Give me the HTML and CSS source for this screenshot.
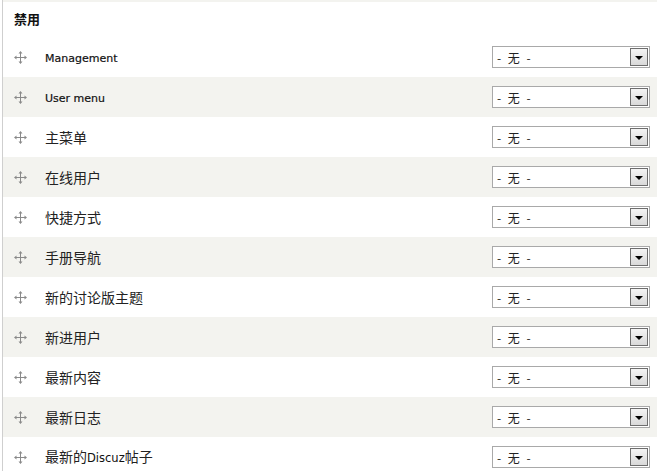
FILE: index.html
```html
<!DOCTYPE html>
<html>
<head>
<meta charset="utf-8">
<link rel="stylesheet" href="styles.css">
</head>
<body>
<div class="page">
  <div class="topstrip"></div>
  <div class="region-title">禁用</div>
  <div class="rows">
    <div class="row"><span class="drag"><svg width="13" height="13" viewBox="0 0 13 13"><path d="M6.5 1.5v10M1.5 6.5h10" stroke="#8a8a8a" stroke-width="1"/><path d="M6.5 0L4.5 2.5h4zM6.5 13L4.5 10.5h4zM0 6.5L2.5 4.5v4zM13 6.5L10.5 4.5v4z" fill="#8a8a8a"/></svg></span><span class="label latin">Management</span><div class="select"><span class="val">- 无 -</span><span class="btn"><span class="tri"></span></span></div></div>
    <div class="row alt"><span class="drag"><svg width="13" height="13" viewBox="0 0 13 13"><path d="M6.5 1.5v10M1.5 6.5h10" stroke="#8a8a8a" stroke-width="1"/><path d="M6.5 0L4.5 2.5h4zM6.5 13L4.5 10.5h4zM0 6.5L2.5 4.5v4zM13 6.5L10.5 4.5v4z" fill="#8a8a8a"/></svg></span><span class="label latin">User menu</span><div class="select"><span class="val">- 无 -</span><span class="btn"><span class="tri"></span></span></div></div>
    <div class="row"><span class="drag"><svg width="13" height="13" viewBox="0 0 13 13"><path d="M6.5 1.5v10M1.5 6.5h10" stroke="#8a8a8a" stroke-width="1"/><path d="M6.5 0L4.5 2.5h4zM6.5 13L4.5 10.5h4zM0 6.5L2.5 4.5v4zM13 6.5L10.5 4.5v4z" fill="#8a8a8a"/></svg></span><span class="label">主菜单</span><div class="select"><span class="val">- 无 -</span><span class="btn"><span class="tri"></span></span></div></div>
    <div class="row alt"><span class="drag"><svg width="13" height="13" viewBox="0 0 13 13"><path d="M6.5 1.5v10M1.5 6.5h10" stroke="#8a8a8a" stroke-width="1"/><path d="M6.5 0L4.5 2.5h4zM6.5 13L4.5 10.5h4zM0 6.5L2.5 4.5v4zM13 6.5L10.5 4.5v4z" fill="#8a8a8a"/></svg></span><span class="label">在线用户</span><div class="select"><span class="val">- 无 -</span><span class="btn"><span class="tri"></span></span></div></div>
    <div class="row"><span class="drag"><svg width="13" height="13" viewBox="0 0 13 13"><path d="M6.5 1.5v10M1.5 6.5h10" stroke="#8a8a8a" stroke-width="1"/><path d="M6.5 0L4.5 2.5h4zM6.5 13L4.5 10.5h4zM0 6.5L2.5 4.5v4zM13 6.5L10.5 4.5v4z" fill="#8a8a8a"/></svg></span><span class="label">快捷方式</span><div class="select"><span class="val">- 无 -</span><span class="btn"><span class="tri"></span></span></div></div>
    <div class="row alt"><span class="drag"><svg width="13" height="13" viewBox="0 0 13 13"><path d="M6.5 1.5v10M1.5 6.5h10" stroke="#8a8a8a" stroke-width="1"/><path d="M6.5 0L4.5 2.5h4zM6.5 13L4.5 10.5h4zM0 6.5L2.5 4.5v4zM13 6.5L10.5 4.5v4z" fill="#8a8a8a"/></svg></span><span class="label">手册导航</span><div class="select"><span class="val">- 无 -</span><span class="btn"><span class="tri"></span></span></div></div>
    <div class="row"><span class="drag"><svg width="13" height="13" viewBox="0 0 13 13"><path d="M6.5 1.5v10M1.5 6.5h10" stroke="#8a8a8a" stroke-width="1"/><path d="M6.5 0L4.5 2.5h4zM6.5 13L4.5 10.5h4zM0 6.5L2.5 4.5v4zM13 6.5L10.5 4.5v4z" fill="#8a8a8a"/></svg></span><span class="label">新的讨论版主题</span><div class="select"><span class="val">- 无 -</span><span class="btn"><span class="tri"></span></span></div></div>
    <div class="row alt"><span class="drag"><svg width="13" height="13" viewBox="0 0 13 13"><path d="M6.5 1.5v10M1.5 6.5h10" stroke="#8a8a8a" stroke-width="1"/><path d="M6.5 0L4.5 2.5h4zM6.5 13L4.5 10.5h4zM0 6.5L2.5 4.5v4zM13 6.5L10.5 4.5v4z" fill="#8a8a8a"/></svg></span><span class="label">新进用户</span><div class="select"><span class="val">- 无 -</span><span class="btn"><span class="tri"></span></span></div></div>
    <div class="row"><span class="drag"><svg width="13" height="13" viewBox="0 0 13 13"><path d="M6.5 1.5v10M1.5 6.5h10" stroke="#8a8a8a" stroke-width="1"/><path d="M6.5 0L4.5 2.5h4zM6.5 13L4.5 10.5h4zM0 6.5L2.5 4.5v4zM13 6.5L10.5 4.5v4z" fill="#8a8a8a"/></svg></span><span class="label">最新内容</span><div class="select"><span class="val">- 无 -</span><span class="btn"><span class="tri"></span></span></div></div>
    <div class="row alt"><span class="drag"><svg width="13" height="13" viewBox="0 0 13 13"><path d="M6.5 1.5v10M1.5 6.5h10" stroke="#8a8a8a" stroke-width="1"/><path d="M6.5 0L4.5 2.5h4zM6.5 13L4.5 10.5h4zM0 6.5L2.5 4.5v4zM13 6.5L10.5 4.5v4z" fill="#8a8a8a"/></svg></span><span class="label">最新日志</span><div class="select"><span class="val">- 无 -</span><span class="btn"><span class="tri"></span></span></div></div>
    <div class="row"><span class="drag"><svg width="13" height="13" viewBox="0 0 13 13"><path d="M6.5 1.5v10M1.5 6.5h10" stroke="#8a8a8a" stroke-width="1"/><path d="M6.5 0L4.5 2.5h4zM6.5 13L4.5 10.5h4zM0 6.5L2.5 4.5v4zM13 6.5L10.5 4.5v4z" fill="#8a8a8a"/></svg></span><span class="label">最新的<span class="latin">Discuz</span>帖子</span><div class="select"><span class="val">- 无 -</span><span class="btn"><span class="tri"></span></span></div></div>
  </div>
</div>
</body>
</html>
```

FILE: styles.css
```css
html, body {
  margin: 0;
  padding: 0;
  background: #fff;
}
body {
  font-family: "DejaVu Sans", "Noto Sans CJK SC", sans-serif;
  color: #222;
  overflow: hidden;
}
.page {
  margin-left: 2px;
  border-left: 1px solid #cfcfcf;
  height: 471px;
}
.topstrip {
  height: 2px;
  background: #f3f3ef;
}
.region-title {
  height: 35px;
  box-sizing: border-box;
  padding: 9px 0 0 11px;
  font-family: "Noto Sans CJK SC", sans-serif;
  font-weight: bold;
  font-size: 13px;
  line-height: 16px;
  color: #111;
}
.row {
  display: flex;
  align-items: center;
  height: 40px;
  background: #fff;
}
.row.alt {
  background: #f3f3ef;
}
.drag {
  width: 13px;
  height: 13px;
  margin-left: 11px;
  display: flex;
}
.label {
  margin-left: 18px;
  font-family: "Noto Sans CJK SC", sans-serif;
  font-size: 14px;
  color: #222;
  flex: 1;
  line-height: 18px;
}
.latin {
  font-family: "DejaVu Sans", sans-serif;
  font-size: 11.5px;
  color: #111;
}
.label.latin {
  font-size: 11px;
  padding-top: 3px;
  -webkit-text-stroke: 0.2px #111;
}
.select {
  width: 158px;
  height: 22px;
  box-sizing: border-box;
  border: 1px solid #a9a9a9;
  background: #fff;
  margin-right: 7px;
  display: flex;
  align-items: center;
  justify-content: space-between;
}
.val {
  padding-left: 4px;
  font-family: "Noto Sans CJK SC", sans-serif;
  font-size: 12px;
  color: #222;
  white-space: pre;
  word-spacing: 4px;
}
.btn {
  width: 18px;
  height: 18px;
  box-sizing: border-box;
  margin-right: 1px;
  border: 1px solid #6e6e6e;
  background: linear-gradient(#f4f4f4, #d9d9d9);
  display: flex;
  align-items: center;
  justify-content: center;
}
.tri {
  width: 0;
  height: 0;
  border-left: 4px solid transparent;
  border-right: 4px solid transparent;
  border-top: 4px solid #000;
  margin-top: 2px;
}
```
